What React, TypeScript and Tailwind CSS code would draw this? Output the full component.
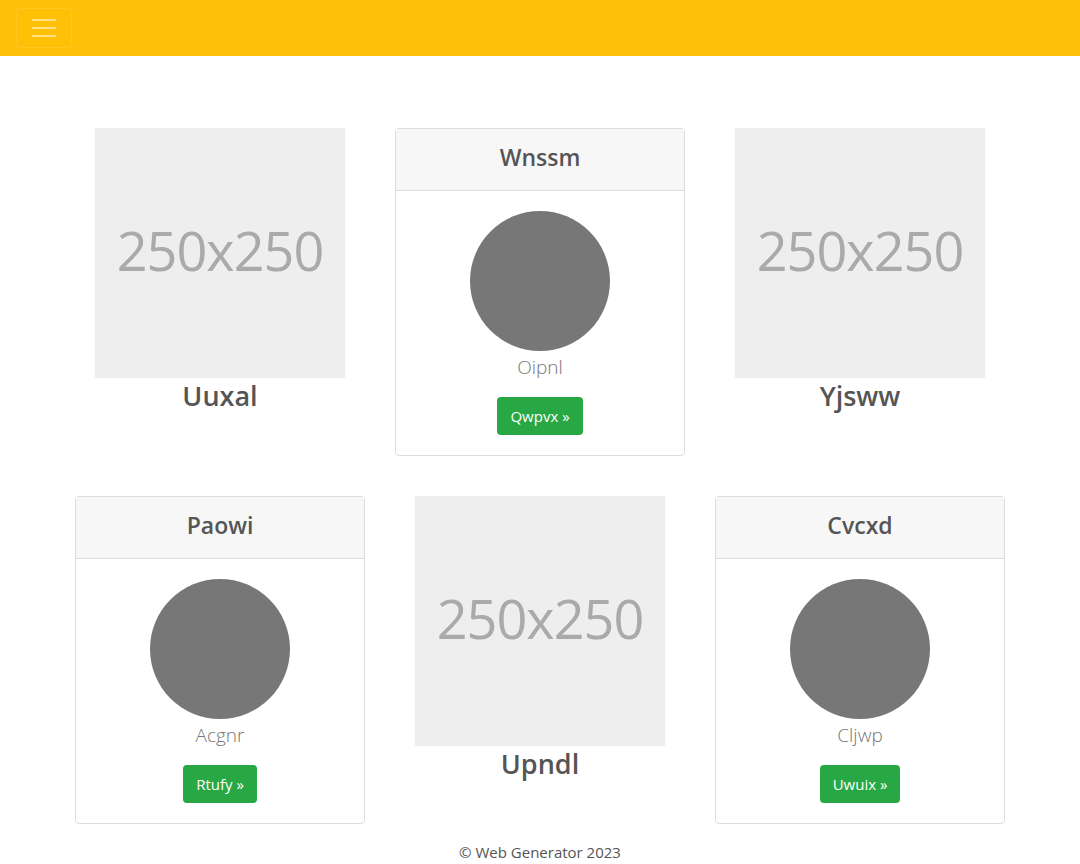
import React from "react";

type Item =
  | { kind: "image"; title: string }
  | { kind: "card"; title: string; name: string; button: string };

const rows: Item[][] = [
  [
    { kind: "image", title: "Uuxal" },
    { kind: "card", title: "Wnssm", name: "Oipnl", button: "Qwpvx" },
    { kind: "image", title: "Yjsww" },
  ],
  [
    { kind: "card", title: "Paowi", name: "Acgnr", button: "Rtufy" },
    { kind: "image", title: "Upndl" },
    { kind: "card", title: "Cvcxd", name: "Cljwp", button: "Uwuix" },
  ],
];

function ImageBlock({ title }: { title: string }) {
  return (
    <div className="flex flex-col items-center">
      <div className="w-[250px] h-[250px] bg-[#eeeeee] flex items-center justify-center pb-[6px]">
        <span className="text-[54px] text-[#aaaaaa] leading-none tracking-[-1px]">250x250</span>
      </div>
      <h3 className="text-[27px] leading-[36px] font-semibold text-[#555555]">{title}</h3>
    </div>
  );
}

function Card({ title, name, button }: { title: string; name: string; button: string }) {
  return (
    <div className="border border-[#dcdcdc] rounded-[4px] bg-white">
      <div className="h-[62px] bg-[#f7f7f7] border-b border-[#dcdcdc] flex items-center justify-center pb-[5px]">
        <h4 className="text-[23px] font-semibold text-[#555555]">{title}</h4>
      </div>
      <div className="flex flex-col items-center pt-5 pb-5">
        <div className="w-[140px] h-[140px] rounded-full bg-[#777777]" />
        <p className="mt-1 text-[19px] leading-[24px] font-light text-[#777777]">{name}</p>
        <a
          href="#"
          className="mt-[18px] h-[38px] px-[13px] flex items-center rounded-[4px] bg-[#28a745] text-white text-[15px]"
        >
          {button} »
        </a>
      </div>
    </div>
  );
}

export default function App() {
  return (
    <div className="min-h-screen bg-white font-['Open_Sans',sans-serif] text-[#555555]">
      {/* Navbar */}
      <nav className="h-[56px] bg-[#ffc107] flex items-center px-4">
        <button className="w-[56px] h-[40px] border border-[rgba(255,255,255,0.1)] rounded-[4px] flex flex-col items-center justify-center gap-[6px]">
          <span className="block w-6 h-[2px] bg-[rgba(255,255,255,0.5)]" />
          <span className="block w-6 h-[2px] bg-[rgba(255,255,255,0.5)]" />
          <span className="block w-6 h-[2px] bg-[rgba(255,255,255,0.5)]" />
        </button>
      </nav>

      {/* Grid */}
      <main className="w-[930px] mx-auto pt-[72px] flex flex-col gap-10">
        {rows.map((row, i) => (
          <div key={i} className="grid grid-cols-3 gap-[30px] items-start">
            {row.map((item) =>
              item.kind === "image" ? (
                <ImageBlock key={item.title} title={item.title} />
              ) : (
                <Card key={item.title} title={item.title} name={item.name} button={item.button} />
              )
            )}
          </div>
        ))}
      </main>

      <footer className="text-center pt-4 text-[15px] leading-[24px] text-[#555555]">
        © Web Generator 2023
      </footer>
    </div>
  );
}
